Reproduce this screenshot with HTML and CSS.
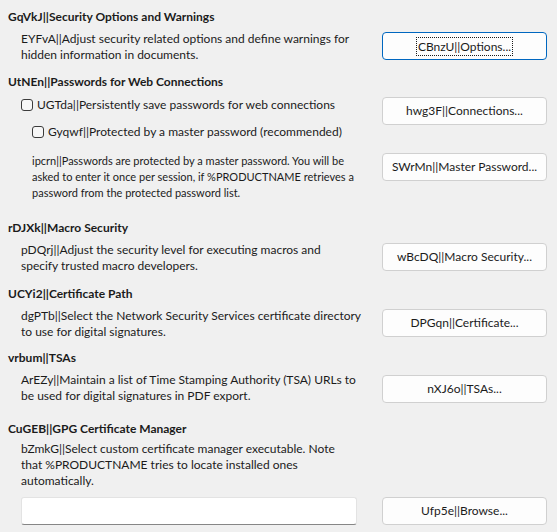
FILE: index.html
```html
<!DOCTYPE html>
<html>
<head>
<meta charset="utf-8">
<link rel="stylesheet" href="styles.css">
</head>
<body>
<div class="page">
  <section class="sec s1">
    <div class="heading">GqVkJ||Security Options and Warnings</div>
    <div class="row">
      <div class="desc">EYFvA||Adjust security related options and define warnings for<br>hidden information in documents.</div>
      <button class="btn focused"><span class="focus">CBnzU||Options...</span></button>
    </div>
  </section>

  <section class="sec s2">
    <div class="heading">UtNEn||Passwords for Web Connections</div>
    <div class="row">
      <label class="check c1"><span class="box"></span>UGTda||Persistently save passwords for web connections</label>
      <button class="btn">hwg3F||Connections...</button>
    </div>
    <label class="check c2"><span class="box"></span>Gyqwf||Protected by a master password (recommended)</label>
    <div class="row info-row">
      <div class="desc info">ipcrn||Passwords are protected by a master password. You will be<br>asked to enter it once per session, if %PRODUCTNAME retrieves a<br>password from the protected password list.</div>
      <button class="btn">SWrMn||Master Password...</button>
    </div>
  </section>

  <section class="sec s3">
    <div class="heading">rDJXk||Macro Security</div>
    <div class="row">
      <div class="desc">pDQrj||Adjust the security level for executing macros and<br>specify trusted macro developers.</div>
      <button class="btn">wBcDQ||Macro Security...</button>
    </div>
  </section>

  <section class="sec s4">
    <div class="heading">UCYi2||Certificate Path</div>
    <div class="row">
      <div class="desc">dgPTb||Select the Network Security Services certificate directory<br>to use for digital signatures.</div>
      <button class="btn">DPGqn||Certificate...</button>
    </div>
  </section>

  <section class="sec s5">
    <div class="heading">vrbum||TSAs</div>
    <div class="row">
      <div class="desc">ArEZy||Maintain a list of Time Stamping Authority (TSA) URLs to<br>be used for digital signatures in PDF export.</div>
      <button class="btn tsa">nXJ6o||TSAs...</button>
    </div>
  </section>

  <section class="sec s6">
    <div class="heading">CuGEB||GPG Certificate Manager</div>
    <div class="desc">bZmkG||Select custom certificate manager executable. Note<br>that %PRODUCTNAME tries to locate installed ones<br>automatically.</div>
    <div class="row path-row">
      <input class="path" type="text">
      <button class="btn">Ufp5e||Browse...</button>
    </div>
  </section>
</div>
</body>
</html>
```

FILE: styles.css
```css
html, body {
  margin: 0;
  padding: 0;
  background: #f0f0f0;
}
body {
  width: 557px;
  height: 532px;
  overflow: hidden;
  font-family: "Lato", "Noto Sans", sans-serif;
  font-size: 12px;
  line-height: 16px;
  color: #1b1b1b;
}
.page {
  padding: 9px 10px 0 8px;
}
.heading {
  font-weight: bold;
  white-space: nowrap;
}
.row {
  display: flex;
  align-items: flex-start;
  justify-content: space-between;
}
.desc {
  padding-left: 13px;
  white-space: nowrap;
}
.btn {
  flex: none;
  width: 165px;
  height: 28px;
  margin-top: 1px;
  box-sizing: border-box;
  border: 1px solid #d0d0d0;
  border-radius: 4px;
  background: #fdfdfd;
  font: inherit;
  color: #1b1b1b;
  padding: 0;
  display: flex;
  align-items: center;
  justify-content: center;
}
.btn.focused {
  border-color: #0067c0;
}
.focus {
  outline: 1px dotted #1b1b1b;
  outline-offset: 0;
  padding: 1px 1px;
  line-height: 15px;
}
.s1 .row { margin-top: 6px; }
.s2 { margin-top: 11px; }
.s2 .row { margin-top: 6px; }
.check {
  display: flex;
  align-items: center;
  height: 16px;
  white-space: nowrap;
}
.box {
  width: 12px;
  height: 12px;
  box-sizing: border-box;
  border: 1px solid #3b3b3b;
  border-radius: 3px;
  background: #f7f7f7;
  margin-right: 4px;
  flex: none;
}
.c1 { margin-left: 13px; margin-top: 1px; }
.c2 { margin-left: 24px; margin-top: -1px; }
.s2 .info-row { margin-top: 13px; }
.info {
  padding-left: 24px;
  font-size: 11px;
}
.info-row .btn { margin-top: 0; }
.s3 { margin-top: 19px; }
.s3 .row { margin-top: 6px; }
.s4 { margin-top: 12px; }
.s4 .row { margin-top: 6px; }
.s5 { margin-top: 10px; }
.s5 .row { margin-top: 6px; }
.s5 .btn { margin-top: 3px; }
.s6 { margin-top: 17px; }
.s6 .desc { margin-top: 4px; }
.s6 .path-row { margin-top: 7px; align-items: center; }
.path {
  margin-left: 13px;
  width: 336px;
  height: 28px;
  box-sizing: border-box;
  border: 1px solid #e3e3e3;
  border-bottom: 1px solid #868686;
  border-radius: 3px;
  background: #ffffff;
  padding: 0 6px;
  font: inherit;
}
```
